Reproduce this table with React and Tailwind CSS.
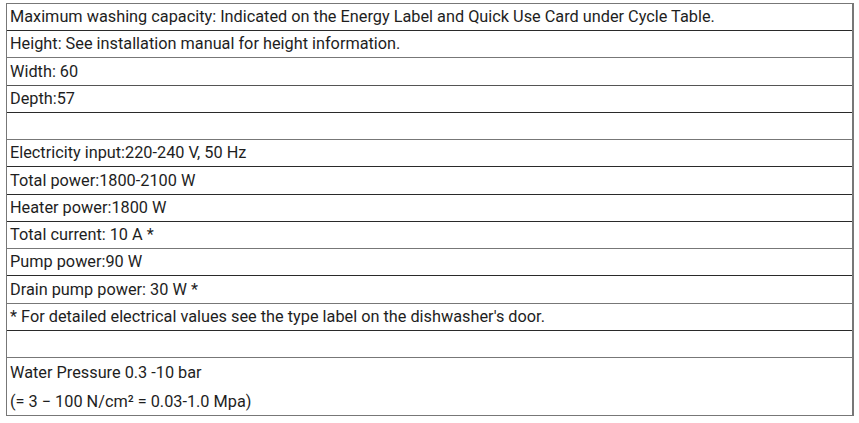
import React from "react";

const rows = [
  ["Maximum washing capacity: Indicated on the Energy Label and Quick Use Card under Cycle Table.", "h-[27px]", "border-[#2a2a2a]"],
  ["Height: See installation manual for height information.", "h-[27px]", "border-[#777777]"],
  ["Width: 60", "h-[28px]", "border-[#555555]"],
  ["Depth:57", "h-[27px]", "border-[#2a2a2a]"],
  ["", "h-[27px]", "border-[#777777]"],
  ["Electricity input:220-240 V, 50 Hz", "h-[27px]", "border-[#2a2a2a]"],
  ["Total power:1800-2100 W", "h-[28px]", "border-[#2a2a2a]"],
  ["Heater power:1800 W", "h-[27px]", "border-[#2a2a2a]"],
  ["Total current: 10 A *", "h-[27px]", "border-[#777777]"],
  ["Pump power:90 W", "h-[27px]", "border-[#2a2a2a]"],
  ["Drain pump power: 30 W *", "h-[28px]", "border-[#777777]"],
  ["* For detailed electrical values see the type label on the dishwasher's door.", "h-[27px]", "border-[#2a2a2a]"],
  ["", "h-[27px]", "border-[#777777]"],
];

export default function App() {
  return (
    <div className="w-[859px] h-[423px] bg-white pt-[3px] pl-[6px]" style={{ fontFamily: "Roboto, 'Liberation Sans', sans-serif" }}>
      <div className="w-[848px] border border-[#777777] border-r-2 flex flex-col text-[16.3px] leading-none text-[#1e1e1e]">
        {rows.map(([t, h, b], i) => (
          <div key={i} className={`${h} border-b ${b} flex items-center pl-[3px] pt-[1px] whitespace-nowrap`}>
            {t}
          </div>
        ))}
        <div className="h-[57px] flex flex-col pl-[3px]">
          <div className="h-[28px] flex items-center pt-[2px]">Water Pressure 0.3 -10 bar</div>
          <div className="h-[29px] flex items-center pt-[3px]">(= 3 − 100 N/cm² = 0.03-1.0 Mpa)</div>
        </div>
      </div>
    </div>
  );
}
